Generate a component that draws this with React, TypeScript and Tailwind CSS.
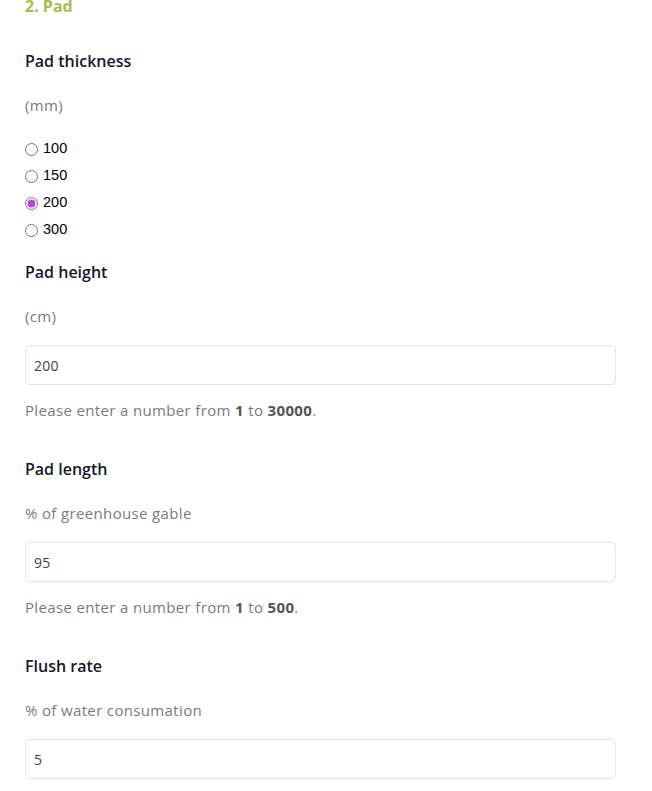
import React, { useState } from 'react';

const font = "font-['Open_Sans',sans-serif]";

const NumberField: React.FC<{ label: string; unit: string; value: string; min?: string; max?: string }> = ({
  label,
  unit,
  value,
  min,
  max,
}) => {
  const [v, setV] = useState(value);
  return (
    <div>
      <h3 className="text-[16px] font-semibold text-[#15172b] leading-[24px] mb-[20px]">{label}</h3>
      <p className="text-[15px] text-[#7a7a7a] leading-[24px] tracking-[0.35px] mb-[17px]">{unit}</p>
      <input
        value={v}
        onChange={(e) => setV(e.target.value)}
        className="w-full h-[40px] border border-[#e2e2e2] rounded-[5px] px-[8px] text-[14px] text-[#3a3f4a] tracking-[0.3px] outline-none"
      />
      {max && (
        <p className="text-[15px] text-[#7a7a7a] leading-[24px] tracking-[0.35px] mt-[13px]">
          Please enter a number from <b className="text-[#555]">{min}</b> to <b className="text-[#555]">{max}</b>.
        </p>
      )}
    </div>
  );
};

export default function App() {
  const [thickness, setThickness] = useState('200');
  return (
    <div className={`${font} bg-white min-h-[791px] pl-[25px] pr-[36px] -mt-[6px]`}>
      <h2 className="text-[16px] font-bold text-[#a8bb4c] leading-[24px]">2. Pad</h2>

      <h3 className="text-[16px] font-semibold text-[#15172b] leading-[24px] mt-[31px] mb-[20px]">Pad thickness</h3>
      <p className="text-[15px] text-[#7a7a7a] leading-[24px] tracking-[0.35px] mb-[22px]">(mm)</p>
      <div className="flex flex-col gap-[7px] font-['Liberation_Sans',sans-serif] text-[14.5px] text-black">
        {['100', '150', '200', '300'].map((o) => (
          <label key={o} className="flex items-center gap-[5px] h-[20px]">
            <input
              type="radio"
              name="thickness"
              checked={thickness === o}
              onChange={() => setThickness(o)}
              className="m-0 w-[13px] h-[13px] accent-[#b04dc8]"
            />
            {o}
          </label>
        ))}
      </div>

      <div className="mt-[20px] flex flex-col gap-[35px]">
        <NumberField label="Pad height" unit="(cm)" value="200" min="1" max="30000" />
        <NumberField label="Pad length" unit="% of greenhouse gable" value="95" min="1" max="500" />
        <NumberField label="Flush rate" unit="% of water consumation" value="5" />
      </div>
    </div>
  );
}
